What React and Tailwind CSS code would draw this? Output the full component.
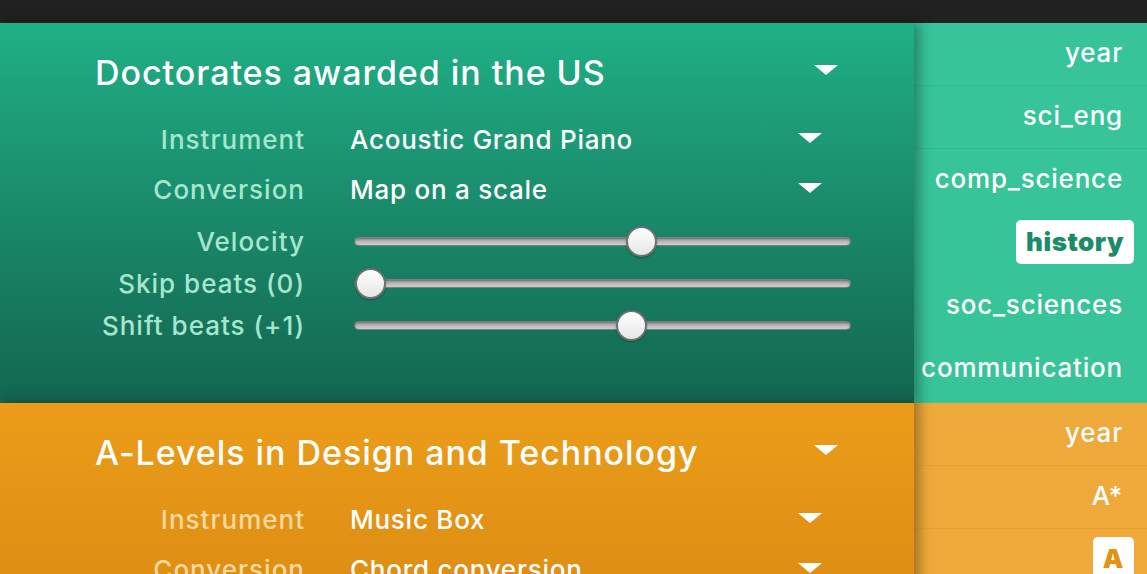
import React from "react";

const FONT = { fontFamily: "Inter, 'Liberation Sans', sans-serif" };

function Tri({ className }) {
  return (
    <svg width="24" height="10" viewBox="0 0 24 10" className={className}>
      <polygon points="0,0 24,0 12,10" fill="white" />
    </svg>
  );
}

function Slider({ pos }) {
  return (
    <div className="relative ml-[4px] w-[497px] h-[9px] rounded-full border border-[#7f7f7f] bg-gradient-to-b from-[#9c9c9c] to-[#d2d2d2] shadow-[inset_0_1px_2px_rgba(0,0,0,0.3)]">
      <div
        className="absolute top-[-12px] w-[31px] h-[31px] rounded-full border-2 border-[#6f6f6f] bg-gradient-to-b from-white to-[#e6e6e6] shadow-[0_1px_2px_rgba(0,0,0,0.3)]"
        style={{ left: pos - 354 - 15.5 }}
      />
    </div>
  );
}

function Section({ theme, title, instrument, conversion, sliders, items }) {
  const green = theme === "green";
  const labelCls =
    "w-[305px] text-right text-[26px] font-medium tracking-[1px] whitespace-nowrap " +
    (green ? "text-[#a6e6cf]" : "text-[#f8d9a0]");
  return (
    <div className="flex h-[380px] shrink-0">
      <div
        className={
          "relative z-10 w-[914px] shrink-0 shadow-[5px_0_12px_rgba(0,0,0,0.35)] " +
          (green
            ? "bg-gradient-to-b from-[#20b085] to-[#136650]"
            : "bg-gradient-to-b from-[#eb9d19] to-[#cf7d0d]")
        }
      >
        <div className="h-[92px] pt-[30px] pl-[95px]">
          <div className="flex w-[743px] items-center justify-between h-[40px]">
            <span className="text-[34px] leading-[40px] font-medium tracking-[0.95px] text-white whitespace-nowrap">
              {title}
            </span>
            <Tri className="mt-[-6px]" />
          </div>
        </div>
        {[["Instrument", instrument], ["Conversion", conversion]].map(([l, v]) => (
          <div key={l} className="flex items-center h-[50px]">
            <div className={labelCls + " mt-[-2px]"}>{l}</div>
            <div className="ml-[45px] w-[472px] flex items-center justify-between">
              <span className="text-[26px] font-medium tracking-[0.75px] text-white whitespace-nowrap mt-[-2px]">{v}</span>
              <Tri className="mt-[-5px]" />
            </div>
          </div>
        ))}
        <div className="mt-[5px]">
          {sliders.map(([l, p]) => (
            <div key={l} className="flex items-center h-[42px]">
              <div className={labelCls}>{l}</div>
              <div className="ml-[45px]">
                <Slider pos={p} />
              </div>
            </div>
          ))}
        </div>
      </div>
      <div className={"flex-1 " + (green ? "bg-[#37c498]" : "bg-[#efa93b]")}>
        {items.map(([name, hl, sep]) => (
          <div
            key={name}
            className={
              "h-[63px] pb-[4px] flex items-center justify-end " +
              (hl ? "pr-[13px] " : "pr-[24px] ") +
              (sep ? (green ? "border-b border-[#2dbd90]" : "border-b border-[#eaa233]") : "")
            }
          >
            {hl ? (
              <span
                className={
                  "bg-white rounded-[5px] px-[10px] h-[44px] flex items-center text-[26px] font-black tracking-[0.5px] " +
                  (green ? "text-[#1b8b68]" : "text-[#e3930f]")
                }
              >
                {name}
              </span>
            ) : (
              <span className="text-[26px] font-medium tracking-[0.8px] text-white">{name}</span>
            )}
          </div>
        ))}
      </div>
    </div>
  );
}

export default function App() {
  return (
    <div className="w-[1147px] h-[574px] overflow-hidden bg-[#212121] flex flex-col" style={FONT}>
      <div className="h-[23px] shrink-0 bg-[#212121]" />
      <Section
        theme="green"
        title="Doctorates awarded in the US"
        instrument="Acoustic Grand Piano"
        conversion="Map on a scale"
        sliders={[
          ["Velocity", 640],
          ["Skip beats (0)", 369],
          ["Shift beats (+1)", 630],
        ]}
        items={[
          ["year", false, true],
          ["sci_eng", false, true],
          ["comp_science", false, false],
          ["history", true, false],
          ["soc_sciences", false, false],
          ["communication", false, false],
        ]}
      />
      <Section
        theme="orange"
        title="A-Levels in Design and Technology"
        instrument="Music Box"
        conversion="Chord conversion"
        sliders={[
          ["Velocity", 640],
          ["Skip beats (0)", 369],
          ["Shift beats (+1)", 630],
        ]}
        items={[
          ["year", false, true],
          ["A*", false, true],
          ["A", true, false],
          ["B", false, false],
          ["C", false, false],
          ["D", false, false],
        ]}
      />
    </div>
  );
}
